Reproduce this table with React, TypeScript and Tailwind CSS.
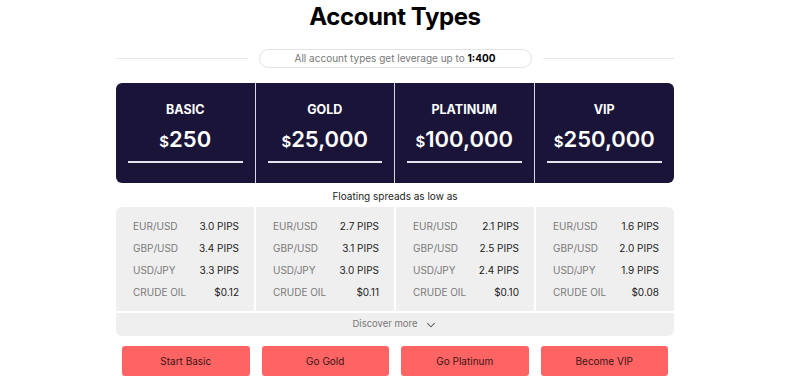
import React from "react";
import { ChevronDown } from "lucide-react";

interface Plan {
  name: string;
  price: string;
  cta: string;
  spreads: [string, string][];
}

const plans: Plan[] = [
  {
    name: "BASIC",
    price: "250",
    cta: "Start Basic",
    spreads: [
      ["EUR/USD", "3.0 PIPS"],
      ["GBP/USD", "3.4 PIPS"],
      ["USD/JPY", "3.3 PIPS"],
      ["CRUDE OIL", "$0.12"],
    ],
  },
  {
    name: "GOLD",
    price: "25,000",
    cta: "Go Gold",
    spreads: [
      ["EUR/USD", "2.7 PIPS"],
      ["GBP/USD", "3.1 PIPS"],
      ["USD/JPY", "3.0 PIPS"],
      ["CRUDE OIL", "$0.11"],
    ],
  },
  {
    name: "PLATINUM",
    price: "100,000",
    cta: "Go Platinum",
    spreads: [
      ["EUR/USD", "2.1 PIPS"],
      ["GBP/USD", "2.5 PIPS"],
      ["USD/JPY", "2.4 PIPS"],
      ["CRUDE OIL", "$0.10"],
    ],
  },
  {
    name: "VIP",
    price: "250,000",
    cta: "Become VIP",
    spreads: [
      ["EUR/USD", "1.6 PIPS"],
      ["GBP/USD", "2.0 PIPS"],
      ["USD/JPY", "1.9 PIPS"],
      ["CRUDE OIL", "$0.08"],
    ],
  },
];

export default function App() {
  return (
    <div className="w-[800px] h-[387px] bg-white flex pl-[116px] font-['Inter',sans-serif] overflow-hidden">
      <div className="w-[558px] flex flex-col">
        {/* heading */}
        <h1 className="text-center text-[24px] leading-[34px] font-bold tracking-[-0.4px] text-black">
          Account Types
        </h1>

        {/* leverage pill */}
        <div className="mt-[15px] flex items-center gap-[11px]">
          <div className="flex-1 h-px bg-[#e8e8e8]" />
          <div className="w-[273px] h-[19px] rounded-full border border-[#e2e2e2] flex items-center justify-center text-[10px] text-[#777]">
            All account types get leverage up to&nbsp;
            <span className="font-bold text-black">1:400</span>
          </div>
          <div className="flex-1 h-px bg-[#e8e8e8]" />
        </div>

        {/* plans */}
        <div className="mt-[15px] h-[100px] rounded-md bg-[#1a1438] grid grid-cols-4 divide-x divide-[#d9d6e6] overflow-hidden">
          {plans.map((p) => (
            <div key={p.name} className="flex flex-col items-center pt-[19px]">
              <div className="text-[12.5px] leading-[16px] font-bold text-white">{p.name}</div>
              <div className="mt-[6px] text-[22px] leading-[30px] font-semibold text-white">
                <span className="text-[15px]">$</span>
                {p.price}
              </div>
              <div className="mt-[4px] self-stretch mx-3 h-[2px] bg-[#e6e3f0]" />
            </div>
          ))}
        </div>

        <div className="mt-[6px] text-center text-[10px] leading-[14px] text-[#222]">
          Floating spreads as low as
        </div>

        {/* spreads */}
        <div className="mt-[4px] grid grid-cols-4 gap-[2px] rounded-t-md overflow-hidden">
          {plans.map((p) => (
            <div key={p.name} className="bg-[#efefef] pt-[8px] pb-[8px] pl-[17px] pr-[15px]">
              {p.spreads.map(([k, v]) => (
                <div key={k} className="h-[22px] flex items-center justify-between">
                  <span className="text-[10px] text-[#7a7a7a]">{k}</span>
                  <span className="text-[10px] text-[#222]">{v}</span>
                </div>
              ))}
            </div>
          ))}
        </div>
        <div className="mt-[2px] h-[23px] bg-[#efefef] rounded-b-md flex items-center justify-center gap-[6px] text-[9.5px] text-[#777]">
          Discover more
          <ChevronDown size={14} strokeWidth={1.75} className="text-[#555]" />
        </div>

        {/* buttons */}
        <div className="mt-[10px] px-[6px] grid grid-cols-4 gap-3">
          {plans.map((p) => (
            <button
              key={p.name}
              className="h-[30px] rounded-[3px] bg-[#ff6464] text-[10px] text-[#3b1414]"
            >
              {p.cta}
            </button>
          ))}
        </div>
      </div>
    </div>
  );
}
